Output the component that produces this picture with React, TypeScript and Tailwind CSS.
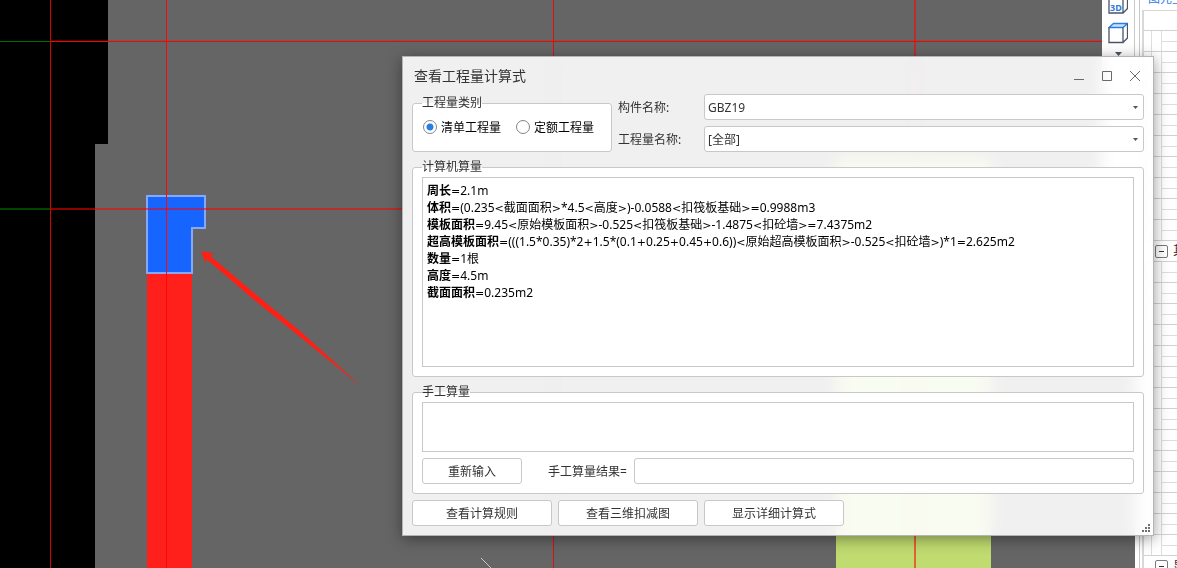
import { useState } from 'react';

const FORMULAS = [
  { name: '周长', value: '2.1m' },
  { name: '体积', value: '(0.235<截面面积>*4.5<高度>)-0.0588<扣筏板基础>=0.9988m3' },
  { name: '模板面积', value: '9.45<原始模板面积>-0.525<扣筏板基础>-1.4875<扣砼墙>=7.4375m2' },
  {
    name: '超高模板面积',
    value: '(((1.5*0.35)*2+1.5*(0.1+0.25+0.45+0.6))<原始超高模板面积>-0.525<扣砼墙>)*1=2.625m2',
  },
  { name: '数量', value: '1根' },
  { name: '高度', value: '4.5m' },
  { name: '截面面积', value: '0.235m2' },
];

const BUTTON =
  'h-[26px] rounded-[3px] border border-[#c8c8c8] bg-white pt-0.5 text-center text-[#333] hover:border-[#2b7de1]';

function Drawing() {
  return (
    <svg className="block h-full w-full" aria-hidden="true" shapeRendering="crispEdges">
      <rect width="100%" height="100%" fill="#656565" />
      <path d="M0 0H108V144H95V2000H0Z" fill="#000" />
      <rect x="836" y="157" width="155" height="2000" fill="#c0db70" />
      <rect x="147" y="274" width="45" height="2000" fill="#ff201b" />
      <path d="M147 196H205V228H192V273H147Z" fill="#1765ff" stroke="#86a8fb" strokeWidth="2" />
      {/* axis grid */}
      <rect x="0" y="41" width="50" height="1" fill="#007000" />
      <rect x="0" y="208" width="50" height="2" fill="#004600" />
      <rect x="50" y="40" width="3000" height="1" fill="#f00" fillOpacity="0.25" />
      <rect x="50" y="41" width="3000" height="1" fill="#e00f0f" />
      <rect x="50" y="208" width="3000" height="2" fill="#f00" fillOpacity="0.55" />
      <rect x="50" y="0" width="1" height="2000" fill="#d40000" />
      <rect x="166" y="0" width="1" height="2000" fill="#f80808" />
      <rect x="553" y="0" width="1" height="2000" fill="#e00f0f" />
      <rect x="914" y="0" width="2" height="2000" fill="#f00" fillOpacity="0.55" />
      <path d="M481 558L501 578" stroke="#c8c8c8" fill="none" shapeRendering="auto" />
      <path
        d="M201 251L214 253.500L210.500 256L256 294.500L300 331L362 387L297 334.500L253 299L207 259.500L205.500 263Z"
        fill="#ff2015"
        shapeRendering="auto"
      />
    </svg>
  );
}

function ViewToolbar() {
  return (
    <div className="absolute top-0 right-0 flex h-[340px] w-[33px] flex-col items-center border-r border-[#c8c8c8] bg-white">
      <button type="button" aria-label="三维" className="h-4">
        <svg width="20" height="16" viewBox="0 0 20 16" fill="none">
          <path d="M1 0V13H15L19.500 8.500V0M15 0V13" stroke="#4a5468" strokeWidth="1.300" />
          <text x="2" y="11" fontSize="9" fontWeight="700" fill="#2b7de1" fontFamily="Noto Sans, sans-serif">
            3D
          </text>
        </svg>
      </button>
      <button type="button" aria-label="视图" className="mt-1.5 h-6">
        <svg width="20" height="24" viewBox="0 0 20 24" fill="none">
          <path d="M1 5.500L5.500 1.500H19.500L15 5.500Z" fill="#cfe2fb" stroke="#2b7de1" strokeWidth="1.300" />
          <path d="M1 5.500V20.500H15V5.500M15 20.500L19.500 16V1.500" stroke="#4a5468" strokeWidth="1.300" />
        </svg>
      </button>
      <button type="button" aria-label="更多" className="mt-1 h-2">
        <svg width="7" height="4" viewBox="0 0 7 4">
          <path d="M0 0H7L3.500 4Z" fill="#4a5468" />
        </svg>
      </button>
    </div>
  );
}

function TreeRows({ count }: { count: number }) {
  return (
    <>
      {Array.from({ length: count }, (_, i) => (
        <div key={i} className="flex h-[21px] border-b border-[#d2d2d2]">
          <div className="w-2 border-r border-[#dedede]" />
          <div className="w-2.5 border-r border-[#dedede]" />
          <div className="h-[11px] flex-1 border-b border-[#dedede]" />
        </div>
      ))}
    </>
  );
}

function TreeGroup({ label }: { label: string }) {
  return (
    <div className="flex h-[21px] items-center gap-[5px] border-b border-[#d2d2d2] pl-[11px] whitespace-nowrap text-[#333]">
      <button
        type="button"
        aria-label="折叠"
        className="flex size-[13px] shrink-0 items-center justify-center rounded-[2px] border border-[#7a7a7a] bg-white"
      >
        <span className="h-px w-[5px] bg-[#333]" />
      </button>
      {label}
    </div>
  );
}

function PropertyPanel() {
  return (
    <aside className="flex w-[42px] shrink-0 overflow-hidden bg-white pl-1">
      <div className="w-[3px] shrink-0 border-l border-[#c8c8c8]" />
      <div className="min-w-0 flex-1">
        <div className="flex h-2.5 items-end overflow-hidden pb-[3px] pl-1.5 whitespace-nowrap text-[#2b7de1]">
          图元至
        </div>
        <div className="border-t border-l-2 border-[#d8d8d8]">
          <div className="h-5 border-b border-[#d2d2d2]" />
          <TreeRows count={10} />
          <TreeGroup label="其他" />
          <TreeRows count={14} />
          <TreeGroup label="显示" />
        </div>
      </div>
    </aside>
  );
}

// relational signs are set wider than the digits around them
function Expression({ text }: { text: string }) {
  return (
    <>
      {text.split(/([=<>+])/).map((part, i) =>
        i % 2 ? (
          <span key={i} className="font-['DejaVu_Sans',sans-serif] text-[11px] leading-none">
            {part}
          </span>
        ) : (
          part
        ),
      )}
    </>
  );
}

function Combo({ id, label, options }: { id: string; label: string; options: string[] }) {
  return (
    <div className="flex items-center">
      <label htmlFor={id} className="w-[86px] shrink-0 pt-0.5">
        {label}
      </label>
      <div className="relative flex-1">
        <select
          id={id}
          className="block h-[26px] w-full appearance-none rounded-[3px] border border-[#c8c8c8] bg-white px-[3px] pt-0.5 text-[#333] outline-none"
        >
          {options.map((o) => (
            <option key={o}>{o}</option>
          ))}
        </select>
        <svg className="pointer-events-none absolute top-3 right-1.5" width="5" height="3" viewBox="0 0 5 3">
          <path d="M0 0H5L2.500 3Z" fill="#4a5468" />
        </svg>
      </div>
    </div>
  );
}

function Radio({ label, checked, onChange }: { label: string; checked: boolean; onChange: () => void }) {
  return (
    <label className="flex items-center gap-1 text-black">
      <input
        type="radio"
        name="quantity-type"
        checked={checked}
        onChange={onChange}
        className="size-3.5 appearance-none rounded-full border border-[#858585] bg-white checked:bg-[radial-gradient(circle,#2b7de1_3px,#fff_4px)]"
      />
      <span className="pt-0.5">{label}</span>
    </label>
  );
}

function FormulaDialog() {
  const [type, setType] = useState('清单工程量');
  const [expression, setExpression] = useState('');
  const [result, setResult] = useState('');

  const reset = () => {
    setExpression('');
    setResult('');
  };

  return (
    <section
      role="dialog"
      aria-labelledby="dialog-title"
      className="absolute top-14 right-[23px] left-[402px] border border-[#b4b4b4] bg-white/90 px-[9px] pb-[9px] text-[#333] shadow-[0_3px_14px_rgba(0,0,0,0.4)] backdrop-blur-sm"
    >
      <header className="flex h-[37px] items-center justify-between pl-0.5">
        <h1 id="dialog-title" className="text-sm">
          查看工程量计算式
        </h1>
        <div className="flex items-center gap-4 pr-[3px] text-[#6a6a6a]">
          <button type="button" aria-label="最小化">
            <svg className="block" width="12" height="12" viewBox="0 0 12 12">
              <path d="M1 9.500H11" stroke="currentColor" />
            </svg>
          </button>
          <button type="button" aria-label="最大化">
            <svg className="block" width="12" height="12" viewBox="0 0 12 12">
              <path d="M1.500 1.500H10.500V10.500H1.500Z" stroke="currentColor" fill="none" />
            </svg>
          </button>
          <button type="button" aria-label="关闭">
            <svg className="block" width="12" height="12" viewBox="0 0 12 12">
              <path d="M1 1L11 11M11 1L1 11" stroke="currentColor" />
            </svg>
          </button>
        </div>
      </header>

      <div className="flex flex-col gap-1.5">
        <div className="flex gap-1.5">
          <fieldset className="h-[58px] w-[200px] rounded-[3px] border border-[#c8c8c8] bg-white px-2.5">
            <legend className="-ml-px leading-[18px]">工程量类别</legend>
            <div className="flex h-[30px] items-center gap-[15px]">
              {['清单工程量', '定额工程量'].map((t) => (
                <Radio key={t} label={t} checked={type === t} onChange={() => setType(t)} />
              ))}
            </div>
          </fieldset>
          <div className="flex flex-1 flex-col gap-1.5">
            <Combo id="component" label="构件名称:" options={['GBZ19']} />
            <Combo id="quantity" label="工程量名称:" options={['[全部]']} />
          </div>
        </div>

        <fieldset className="rounded-[3px] border border-[#c8c8c8] bg-white px-[9px] pt-px pb-[9px]">
          <legend className="leading-[18px]">计算机算量</legend>
          <div className="h-[190px] overflow-auto border border-[#c8c8c8] bg-white p-1 leading-[17px] text-black">
            {FORMULAS.map((f) => (
              <p key={f.name} className="whitespace-nowrap">
                <b>{f.name}</b>
                <Expression text={`=${f.value}`} />
              </p>
            ))}
          </div>
        </fieldset>

        <fieldset className="rounded-[3px] border border-[#c8c8c8] bg-white px-[9px] pt-px pb-[9px]">
          <legend className="leading-[18px]">手工算量</legend>
          <textarea
            aria-label="手工算量"
            value={expression}
            onChange={(e) => setExpression(e.target.value)}
            className="block h-[50px] w-full resize-none border border-[#c8c8c8] bg-white p-1 outline-none"
          />
          <div className="mt-1.5 flex items-center">
            <button type="button" onClick={reset} className={`${BUTTON} w-[100px]`}>
              重新输入
            </button>
            <label htmlFor="result" className="w-[112px] pt-0.5 pl-[26px]">
              手工算量结果=
            </label>
            <input
              id="result"
              value={result}
              onChange={(e) => setResult(e.target.value)}
              className="h-[26px] min-w-0 flex-1 rounded-[3px] border border-[#c8c8c8] bg-white px-1 outline-none"
            />
          </div>
        </fieldset>

        <footer className="flex gap-1.5">
          {['查看计算规则', '查看三维扣减图', '显示详细计算式'].map((t) => (
            <button key={t} type="button" className={`${BUTTON} w-[140px]`}>
              {t}
            </button>
          ))}
        </footer>
      </div>

      {/* resize grip */}
      <svg className="absolute right-[3px] bottom-[3px]" width="8" height="8" viewBox="0 0 8 8" fill="#6b7078">
        <path d="M6 0h2v2h-2zM3 3h2v2h-2zM6 3h2v2h-2zM0 6h2v2h-2zM3 6h2v2h-2zM6 6h2v2h-2z" />
      </svg>
    </section>
  );
}

export default function App() {
  return (
    <div className="relative flex h-screen overflow-hidden font-['Noto_Sans','Noto_Sans_CJK_SC',sans-serif] text-xs">
      <main className="relative min-w-0 flex-1">
        <Drawing />
        <ViewToolbar />
      </main>
      <PropertyPanel />
      <FormulaDialog />
    </div>
  );
}
